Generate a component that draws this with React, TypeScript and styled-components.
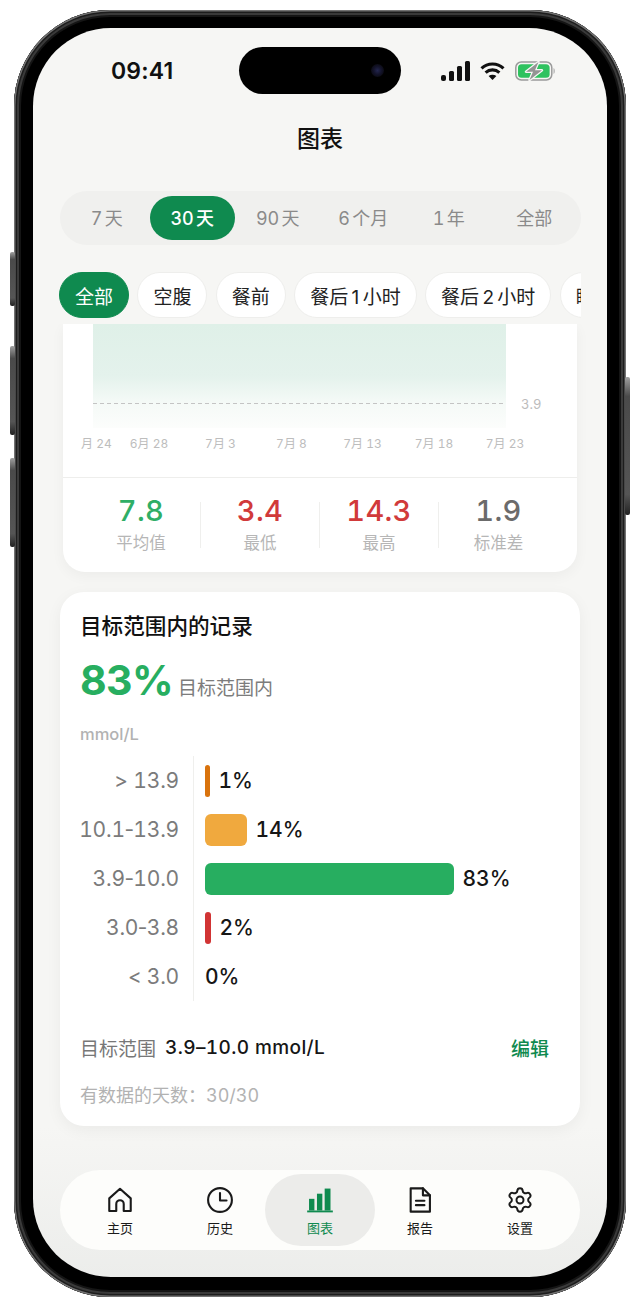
import React from "react";
import styled, { createGlobalStyle } from "styled-components";
import { Settings } from "lucide-react";

const FONT = `Inter, "Noto Sans CJK SC", "Noto Sans", sans-serif`;

const Global = createGlobalStyle`
  html, body { margin: 0; padding: 0; background: #fff; }
  body { font-family: ${FONT}; font-variant-numeric: tabular-nums; }
  * { box-sizing: border-box; }
`;

const Device = styled.div`
  position: relative;
  width: 612px;
  height: 1287px;
  margin: 10px 0 0 14px;
  padding: 18px 19px 19px 19px;
  border-radius: 96px;
  background: #000;
  box-shadow: inset 0 0 0 1.5px #737373, inset 0 0 0 3px #1d1d1d, inset 0 0 0 5px #3a3a3a, inset 0 0 0 7px #151515;
`;

const SideButton = styled.div<{ $side: "left" | "right"; $top: number; $height: number }>`
  position: absolute;
  top: ${(p) => p.$top}px;
  ${(p) => p.$side}: -4px;
  width: 5px;
  height: ${(p) => p.$height}px;
  border-radius: 2px;
  background: linear-gradient(180deg, #a0a0a0 0, #4a4a4a 14%, #555 85%, #222 100%);
`;

const Screen = styled.div`
  position: relative;
  height: 1249px;
  border-radius: 78px;
  overflow: hidden;
  background: linear-gradient(180deg, #f6f6f4 0, #f6f6f4 88%, #ecedeb 100%);
  display: flex;
  flex-direction: column;
`;

const StatusBar = styled.div`
  height: 86px;
  flex: none;
  display: flex;
  align-items: center;
  justify-content: space-between;
  padding: 0 51px 0 78px;
`;

const Time = styled.div`
  font-size: 23px;
  font-weight: 600;
  color: #111;
  letter-spacing: 0.2px;
  font-variant-numeric: normal;
`;

const StatusIcons = styled.div`
  display: flex;
  align-items: center;
  gap: 10px;
`;

const Island = styled.div`
  position: absolute;
  top: 19px;
  left: 206px;
  width: 162px;
  height: 47px;
  border-radius: 24px;
  background: #000;
`;

const Camera = styled.div`
  position: absolute;
  top: 17px;
  right: 17px;
  width: 13px;
  height: 13px;
  border-radius: 50%;
  background: radial-gradient(circle, #23264f 0, #14142c 40%, #0a0a12 75%);
`;

const Title = styled.h1`
  flex: none;
  height: 48px;
  margin: 0;
  padding-bottom: 3px;
  display: flex;
  align-items: center;
  justify-content: center;
  font-size: 23px;
  font-weight: 500;
  color: #111;
`;

const Segment = styled.div`
  flex: none;
  margin: 29px 26px 0 27px;
  height: 54px;
  padding: 5px 4px;
  border-radius: 27px;
  background: #f0f0ee;
  display: grid;
  grid-template-columns: repeat(6, 1fr);
`;

const SegmentItem = styled.div<{ $active?: boolean }>`
  display: flex;
  align-items: center;
  justify-content: center;
  padding-bottom: 2px;
  border-radius: 22px;
  font-size: 18px;
  word-spacing: -2.5px;
  font-weight: ${(p) => (p.$active ? 500 : 400)};
  color: ${(p) => (p.$active ? "#fff" : "#8a8a8a")};
  background: ${(p) => (p.$active ? "#0f8a4f" : "transparent")};
`;

const ChipRow = styled.div`
  flex: none;
  margin: 27px 26px 0 26px;
  height: 46px;
  display: flex;
  gap: 8.4px;
  overflow: hidden;
`;

const Chip = styled.div<{ $active?: boolean }>`
  flex: none;
  height: 46px;
  padding: 0 15px;
  display: flex;
  align-items: center;
  border-radius: 23px;
  font-size: 19px;
  word-spacing: -2px;
  font-variant-numeric: normal;
  color: ${(p) => (p.$active ? "#fff" : "#222")};
  background: ${(p) => (p.$active ? "#0f8a4f" : "#fff")};
  border: 1px solid ${(p) => (p.$active ? "#0f8a4f" : "#eeeeec")};
`;

const ScrollArea = styled.div`
  flex: none;
  margin-top: 6px;
  height: 846px;
  overflow: hidden;
  display: flex;
  flex-direction: column;
  align-items: center;
`;

const ChartCard = styled.section`
  flex: none;
  width: 514px;
  background: #fff;
  border-radius: 0 0 22px 22px;
  box-shadow: 0 4px 14px rgba(0, 0, 0, 0.045);
`;

const ChartSvg = styled.svg`
  display: block;
  width: 514px;
  height: 153px;
  font-family: ${FONT};
`;

const StatRow = styled.div`
  height: 95px;
  border-top: 1px solid #eeeeec;
  padding: 0 19px;
  display: grid;
  grid-template-columns: repeat(4, 119px);
  align-items: center;
`;

const Stat = styled.div<{ $divider?: boolean }>`
  height: 46px;
  display: flex;
  flex-direction: column;
  align-items: center;
  justify-content: center;
  border-right: ${(p) => (p.$divider ? "1px solid #efefed" : "none")};
`;

const StatValue = styled.div<{ $color: string }>`
  font-size: 29px;
  line-height: 30px;
  font-weight: 500;
  letter-spacing: 0.3px;
  color: ${(p) => p.$color};
`;

const StatLabel = styled.div`
  margin-top: 6px;
  font-size: 16.5px;
  line-height: 22px;
  color: #b6b6b6;
`;

const TargetCard = styled.section`
  flex: none;
  width: 520px;
  height: 534px;
  margin-top: 20px;
  padding: 20px 21px 0 20px;
  background: #fff;
  border-radius: 24px;
  box-shadow: 0 4px 16px rgba(0, 0, 0, 0.05);
`;

const CardTitle = styled.h2`
  margin: 0;
  font-size: 21.6px;
  line-height: 28px;
  font-weight: 500;
  color: #111;
`;

const Headline = styled.div`
  margin-top: 15px;
  height: 50px;
  display: flex;
  align-items: baseline;
  gap: 5px;
`;

const Percent = styled.span`
  font-size: 41px;
  line-height: 50px;
  font-weight: 700;
  color: #27ae60;
  font-variant-numeric: normal;
  letter-spacing: -0.6px;
`;

const HeadlineLabel = styled.span`
  font-size: 19px;
  color: #7c7c7c;
`;

const Unit = styled.div`
  margin-top: 19px;
  font-size: 16.5px;
  line-height: 20px;
  font-weight: 500;
  color: #b2b2b2;
`;

const Rows = styled.div`
  margin-top: 12px;
  display: flex;
  flex-direction: column;
`;

const Row = styled.div`
  height: 49px;
  display: grid;
  grid-template-columns: 99px 1fr;
  align-items: stretch;
`;

const RowLabel = styled.div`
  display: flex;
  align-items: center;
  justify-content: flex-end;
  white-space: nowrap;
  font-size: 21px;
  letter-spacing: -0.2px;
  color: #7b7b7b;
`;

const Dash = styled.span`
  margin: 0 -2.5px;
`;

const RowTrack = styled.div`
  margin-left: 14px;
  padding-left: 11px;
  border-left: 1px solid #efefed;
  display: flex;
  align-items: center;
  gap: 8.5px;
`;

const Bar = styled.div<{ $color: string; $radius: number }>`
  height: 32px;
  border-radius: ${(p) => p.$radius}px;
  background: ${(p) => p.$color};
`;

const RowValue = styled.div`
  font-size: 21px;
  font-weight: 500;
  color: #161616;
`;

const RangeLine = styled.div`
  margin-top: 23px;
  height: 46px;
  display: flex;
  align-items: center;
  padding-right: 10px;
`;

const RangeLabel = styled.span`
  font-size: 19px;
  color: #777;
`;

const RangeValue = styled.span`
  margin-left: 9px;
  font-size: 19px;
  font-weight: 500;
  letter-spacing: 0.4px;
  color: #161616;
`;

const EditLink = styled.span`
  margin-left: auto;
  font-size: 19px;
  font-weight: 500;
  color: #0f8a4f;
`;

const DaysLine = styled.div`
  margin-top: 14px;
  font-size: 18px;
  line-height: 24px;
  color: #b2b2b2;
`;

const TabBar = styled.nav`
  flex: none;
  margin: 0 27px;
  height: 80px;
  padding: 4px 10px;
  border-radius: 40px;
  background: #fdfdfb;
  display: grid;
  grid-template-columns: repeat(5, 1fr);
`;

const TabItem = styled.div<{ $active?: boolean }>`
  display: flex;
  flex-direction: column;
  align-items: center;
  justify-content: flex-start;
  padding-top: 12px;
  margin: 0 -5px;
  border-radius: 36px;
  background: ${(p) => (p.$active ? "#ececea" : "transparent")};
  color: ${(p) => (p.$active ? "#0f8a4f" : "#1a1a1a")};
`;

const TabLabel = styled.span`
  margin-top: 5px;
  font-size: 13px;
  line-height: 18px;
  font-weight: 400;
`;

const IconBox = styled.svg`
  display: block;
  width: 28px;
  height: 28px;
  fill: none;
  stroke: currentColor;
  stroke-width: 1.8;
  stroke-linecap: round;
  stroke-linejoin: round;
`;

const SignalIcon = () => (
  <svg width="29" height="20" viewBox="0 0 29 20">
    <rect x="0" y="14" width="5" height="6" rx="2" fill="#111" />
    <rect x="8" y="10" width="5" height="10" rx="1.5" fill="#111" />
    <rect x="16" y="5" width="5" height="15" rx="1.5" fill="#111" />
    <rect x="24" y="0" width="5" height="20" rx="1.5" fill="#111" />
  </svg>
);

const WifiIcon = () => (
  <svg width="25" height="20" viewBox="0 0 25 20" fill="none" stroke="#111" strokeWidth="3.1">
    <path d="M1.5 7.4 C7.6 1.6 17.4 1.6 23.5 7.4" />
    <path d="M5.6 11.6 C9.6 8 15.4 8 19.4 11.6" />
    <path d="M12.5 19 L8.6 15 C10.8 13.4 14.2 13.4 16.4 15 Z" fill="#111" stroke="none" />
  </svg>
);

const BatteryIcon = () => (
  <svg width="41" height="20" viewBox="0 0 41 20" fill="none">
    <rect x="0.8" y="1" width="36" height="18" rx="5.5" stroke="#9b9b9b" strokeWidth="1.5" />
    <rect x="3" y="3.2" width="31.6" height="13.6" rx="3.6" fill="#2fc25f" />
    <path d="M38.6 7 C40 7.6 40 12.4 38.6 13 Z" fill="#9b9b9b" />
    <path
      d="M23.5 1 L11 10.8 H18 L14.5 19 L27 9.2 H20 Z"
      fill="#949494"
      stroke="#f6f6f4"
      strokeWidth="2.4"
      strokeLinejoin="round"
      paintOrder="stroke"
    />
  </svg>
);

const HomeIcon = () => (
  <IconBox viewBox="0 0 24 24">
    <path d="M2.8 10.6 L12 2.4 L21.2 10.6 V21.4 H15.2 V15.4 a3.2 3.2 0 0 0 -6.4 0 V21.4 H2.8 Z" />
  </IconBox>
);

const ClockIcon = () => (
  <IconBox viewBox="0 0 24 24">
    <circle cx="12" cy="12" r="10.2" />
    <path d="M12 6 V12.4 H17.6" />
  </IconBox>
);

const BarsIcon = () => (
  <svg width="28" height="28" viewBox="0 0 24 24" fill="currentColor">
    <rect x="2.6" y="11" width="4.6" height="10" />
    <rect x="9.4" y="6.6" width="4.6" height="14.4" />
    <rect x="16" y="2.2" width="5" height="18.8" />
    <rect x="1" y="21" width="22" height="1.6" />
  </svg>
);

const FileIcon = () => (
  <IconBox viewBox="0 0 24 24">
    <path d="M4 2 H14.5 L20.5 8 V22 H4 Z" />
    <path d="M14.5 2 V8 H20.5" />
    <path d="M8.5 12.6 H15.8 M8.5 16.4 H15.8" />
  </IconBox>
);

const periods = ["7 天", "30 天", "90 天", "6 个月", "1 年", "全部"];
const chips = ["全部", "空腹", "餐前", "餐后 1 小时", "餐后 2 小时", "睡前"];
const xLabels: [number, string][] = [
  [33.5, "月 24"],
  [86, "6月 28"],
  [157.5, "7月 3"],
  [228.5, "7月 8"],
  [299.5, "7月 13"],
  [371, "7月 18"],
  [442, "7月 23"],
];
const stats = [
  { value: "7.8", label: "平均值", color: "#2fae66" },
  { value: "3.4", label: "最低", color: "#d13a3a" },
  { value: "14.3", label: "最高", color: "#d13a3a" },
  { value: "1.9", label: "标准差", color: "#6b6b6b" },
];
const rows = [
  { from: "> 13.9", to: "", value: "1%", width: 5, color: "#d9730d", radius: 3 },
  { from: "10.1", to: "13.9", value: "14%", width: 42, color: "#f0a93e", radius: 6 },
  { from: "3.9", to: "10.0", value: "83%", width: 249, color: "#27ae60", radius: 6 },
  { from: "3.0", to: "3.8", value: "2%", width: 6, color: "#d13434", radius: 3 },
  { from: "< 3.0", to: "", value: "0%", width: 0, color: "transparent", radius: 0 },
];
const tabs = [
  { label: "主页", icon: <HomeIcon /> },
  { label: "历史", icon: <ClockIcon /> },
  { label: "图表", icon: <BarsIcon />, active: true },
  { label: "报告", icon: <FileIcon /> },
  { label: "设置", icon: <Settings size={28} strokeWidth={1.7} /> },
];

export default function App() {
  return (
    <>
      <Global />
      <Device>
        <SideButton $side="left" $top={242} $height={54} />
        <SideButton $side="left" $top={336} $height={89} />
        <SideButton $side="left" $top={448} $height={89} />
        <SideButton $side="right" $top={367} $height={138} />
        <Screen>
          <Island>
            <Camera />
          </Island>
          <StatusBar>
            <Time>09:41</Time>
            <StatusIcons>
              <SignalIcon />
              <WifiIcon />
              <BatteryIcon />
            </StatusIcons>
          </StatusBar>
          <Title>图表</Title>
          <Segment>
            {periods.map((p) => (
              <SegmentItem key={p} $active={p === "30 天"}>
                {p}
              </SegmentItem>
            ))}
          </Segment>
          <ChipRow>
            {chips.map((c, i) => (
              <Chip key={c} $active={i === 0}>
                {c}
              </Chip>
            ))}
          </ChipRow>
          <ScrollArea>
            <ChartCard>
              <ChartSvg viewBox="0 0 514 153">
                <defs>
                  <linearGradient id="band" x1="0" y1="0" x2="0" y2="1">
                    <stop offset="0" stopColor="#dff0e8" />
                    <stop offset="0.5" stopColor="#e4f2ec" />
                    <stop offset="0.76" stopColor="#f5faf7" />
                    <stop offset="1" stopColor="#fcfdfc" />
                  </linearGradient>
                </defs>
                <rect x="30" y="0" width="413" height="104" fill="url(#band)" />
                <line x1="30" y1="79.5" x2="443" y2="79.5" stroke="#c4c4c4" strokeWidth="1" strokeDasharray="4 3" />
                <text x="458" y="85" fontSize="13" fill="#bcbcbc">3.9</text>
                {xLabels.map(([x, t]) => (
                  <text key={t} x={x} y="124" fontSize="12" fill="#bdbdbd" textAnchor="middle">
                    {t}
                  </text>
                ))}
              </ChartSvg>
              <StatRow>
                {stats.map((s, i) => (
                  <Stat key={s.label} $divider={i < 3}>
                    <StatValue $color={s.color}>{s.value}</StatValue>
                    <StatLabel>{s.label}</StatLabel>
                  </Stat>
                ))}
              </StatRow>
            </ChartCard>
            <TargetCard>
              <CardTitle>目标范围内的记录</CardTitle>
              <Headline>
                <Percent>83%</Percent>
                <HeadlineLabel>目标范围内</HeadlineLabel>
              </Headline>
              <Unit>mmol/L</Unit>
              <Rows>
                {rows.map((r) => (
                  <Row key={r.from}>
                    <RowLabel>
                      <span>
                        {r.from}
                        {r.to && <Dash>-</Dash>}
                        {r.to}
                      </span>
                    </RowLabel>
                    <RowTrack>
                      {r.width > 0 && <Bar $color={r.color} $radius={r.radius} style={{ width: r.width }} />}
                      <RowValue>{r.value}</RowValue>
                    </RowTrack>
                  </Row>
                ))}
              </Rows>
              <RangeLine>
                <RangeLabel>目标范围</RangeLabel>
                <RangeValue>3.9–10.0 mmol/L</RangeValue>
                <EditLink>编辑</EditLink>
              </RangeLine>
              <DaysLine>有数据的天数：30/30</DaysLine>
            </TargetCard>
          </ScrollArea>
          <TabBar>
            {tabs.map((t) => (
              <TabItem key={t.label} $active={t.active}>
                {t.icon}
                <TabLabel>{t.label}</TabLabel>
              </TabItem>
            ))}
          </TabBar>
        </Screen>
      </Device>
    </>
  );
}
